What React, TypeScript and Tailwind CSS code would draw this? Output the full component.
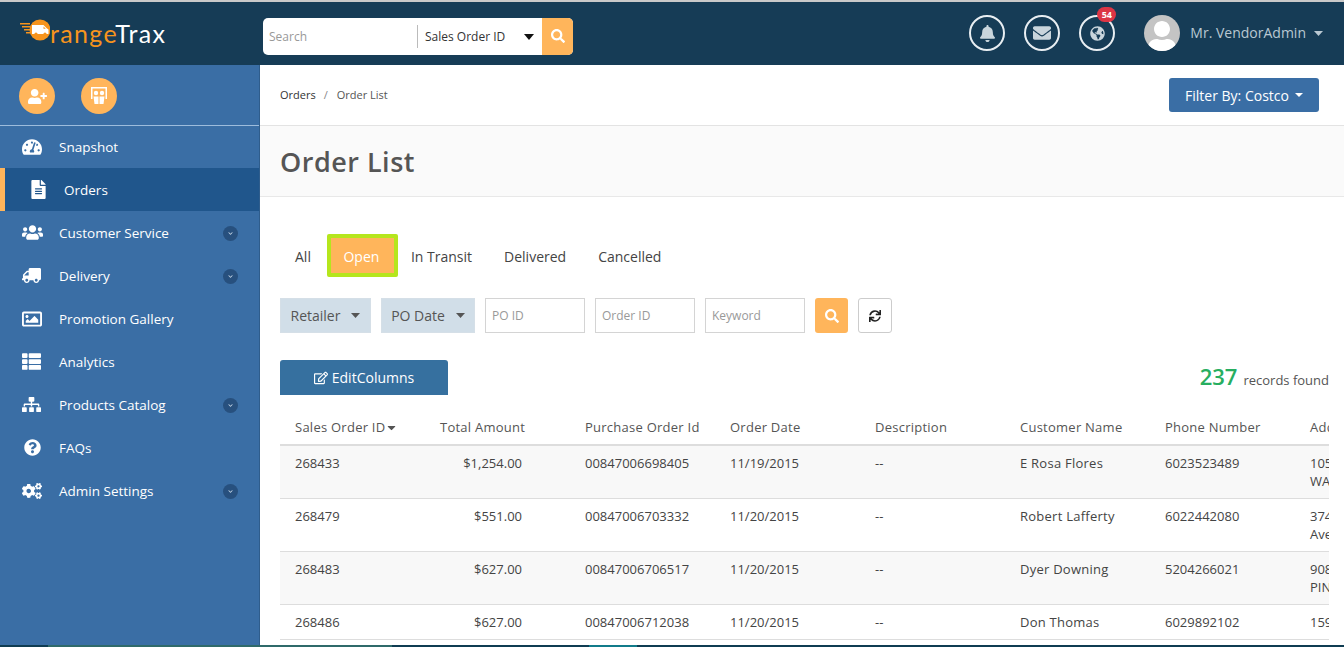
import {
  FaBell,
  FaCaretDown,
  FaChevronDown,
  FaCogs,
  FaEnvelope,
  FaFileAlt,
  FaGlobeAmericas,
  FaRegImage,
  FaQuestionCircle,
  FaRegEdit,
  FaSearch,
  FaSitemap,
  FaSync,
  FaTachometerAlt,
  FaThList,
  FaTruck,
  FaUserPlus,
  FaUsers,
  FaUser,
} from "react-icons/fa";

const menu = [
  { label: "Snapshot", icon: FaTachometerAlt, size: 20 },
  { label: "Orders", icon: FaFileAlt, size: 19, active: true },
  { label: "Customer Service", icon: FaUsers, size: 21, sub: true },
  { label: "Delivery", icon: FaTruck, size: 19, sub: true, flip: true },
  { label: "Promotion Gallery", icon: FaRegImage, size: 20 },
  { label: "Analytics", icon: FaThList, size: 19 },
  { label: "Products Catalog", icon: FaSitemap, size: 19, sub: true },
  { label: "FAQs", icon: FaQuestionCircle, size: 17, sub: false, nudge: true },
  { label: "Admin Settings", icon: FaCogs, size: 20, sub: true },
];

const columns = ["Sales Order ID", "Total Amount", "Purchase Order Id", "Order Date", "Description", "Customer Name", "Phone Number", "Address"];

const rows = [
  ["268433", "$1,254.00", "00847006698405", "11/19/2015", "--", "E Rosa Flores", "6023523489", "10544 W Palm Ln", "WADDELL AZ"],
  ["268479", "$551.00", "00847006703332", "11/20/2015", "--", "Robert Lafferty", "6022442080", "3741 E Oak", "Ave Phoenix"],
  ["268483", "$627.00", "00847006706517", "11/20/2015", "--", "Dyer Downing", "5204266021", "908 N Main", "PINAL AZ"],
  ["268486", "$627.00", "00847006712038", "11/20/2015", "--", "Don Thomas", "6029892102", "1593 E Mesa", ""],
];

const tabs = ["All", "Open", "In Transit", "Delivered", "Cancelled"];

function Logo() {
  return (
    <div className="flex items-start">
      {/* speed lines, van and the round O */}
      <svg width="30" height="22" viewBox="0 0 30 22" className="mt-[1px]">
        <g fill="#f7941d">
          <rect x="0" y="4" width="10" height="1.500" />
          <rect x="2" y="7" width="8" height="1.500" />
          <rect x="4" y="10" width="6" height="1.500" />
          <rect x="6" y="13" width="4" height="1.500" />
          <circle cx="20" cy="11" r="10.500" />
        </g>
        <path d="M12 6h11.500l3.500 3.500 1.500 1v4.500H12z" fill="#fff" />
        <path d="M23.500 7.500l2.300 2.300h-2.300z" fill="#f7941d" />
        <circle cx="16" cy="15" r="1.600" fill="#f7941d" />
        <circle cx="25" cy="15" r="1.600" fill="#f7941d" />
      </svg>
      <span className="font-['Lato',sans-serif] text-[25px] leading-[30px] tracking-[1.350px] text-[#f7941d]">
        range<span className="text-white">Trax</span>
      </span>
    </div>
  );
}

function BoardIcon() {
  return (
    <svg width="16" height="18" viewBox="0 0 16 18" fill="#fff">
      <path d="M0 0h16v12h-1.500V1.500h-13V12H0z" />
      <circle cx="5" cy="6" r="2.200" />
      <circle cx="11" cy="6" r="2.200" />
      <path d="M2.500 9.500h5V17H3.500zM8.500 9.500h5l-1 7.500h-4z" />
    </svg>
  );
}

export default function App() {
  return (
    <div className="flex h-[647px] w-[1344px] flex-col overflow-hidden bg-white font-['Open_Sans',sans-serif] text-[13px] text-[#444]">
      <div className="h-[2px] shrink-0 bg-[#c9c9c9]" />

      {/* header */}
      <header className="flex h-[63px] shrink-0 items-center bg-[#163c56]">
        <div className="mb-[2px] w-[263px] pl-[20px]">
          <Logo />
        </div>
        <div className="mt-[5px] flex h-[37px] w-[310px] overflow-hidden rounded-[5px] bg-white">
          <div className="flex w-[154px] items-center pl-[6px] pt-[2px] text-[12px] text-[#999]">Search</div>
          <div className="my-[7px] w-px bg-[#bbb]" />
          <div className="flex flex-1 items-center pl-[7px] pt-[2px] text-[12px] text-[#333]">
            Sales Order ID
            <svg width="10" height="6" viewBox="0 0 10 6" className="ml-[19px]">
              <path d="M0 0h10L5 6z" fill="#111" />
            </svg>
          </div>
          <div className="flex w-[31px] items-center justify-center bg-[#ffb55b] text-white">
            <FaSearch size={14} />
          </div>
        </div>

        <div className="mb-[1px] ml-auto flex items-center">
          <span className="flex h-[36px] w-[36px] items-center justify-center rounded-full border-2 border-[#e8eef2] text-[#c9d5dc]">
            <FaBell size={17} />
          </span>
          <span className="ml-[19px] flex h-[36px] w-[36px] items-center justify-center rounded-full border-2 border-[#e8eef2] text-[#c9d5dc]">
            <FaEnvelope size={18} />
          </span>
          <span className="relative ml-[19px] flex h-[36px] w-[36px] items-center justify-center rounded-full border-2 border-[#e8eef2] text-[#c9d5dc]">
            <FaGlobeAmericas size={15} />
            <span className="absolute -top-[10px] left-[16px] flex h-[15px] w-[19px] items-center justify-center rounded-full bg-[#dc3545] text-[9px] font-bold leading-none text-white">
              54
            </span>
          </span>
          <span className="relative ml-[29px] flex h-[36px] w-[36px] items-center justify-center overflow-hidden rounded-full bg-[#c4c4c4] text-white">
            <FaUser size={32} className="mt-[7px]" />
          </span>
          <span className="ml-[10px] pb-[2px] text-[14px] text-[#b9c8d2]">Mr. VendorAdmin</span>
          <svg width="9" height="5" viewBox="0 0 9 5" className="ml-[8px] mr-[21px]">
            <path d="M0 0h9L4.500 5z" fill="#b9c8d2" />
          </svg>
        </div>
      </header>

      <div className="flex min-h-0 flex-1">
        {/* sidebar */}
        <aside className="w-[260px] shrink-0 border-r border-[#2f5d8c] bg-[#3a6ea5] text-[13.500px] text-white">
          <div className="flex h-[61px] items-center gap-[26px] border-b border-[#9dbcdc] pl-[19px] pt-[2px]">
            <span className="flex h-[36px] w-[36px] items-center justify-center rounded-full bg-[#ffb55b]">
              <FaUserPlus size={19} />
            </span>
            <span className="flex h-[36px] w-[36px] items-center justify-center rounded-full bg-[#ffb55b]">
              <BoardIcon />
            </span>
          </div>
          <nav className="-mt-px">
            {menu.map((m) => (
              <div
                key={m.label}
                className={
                  m.active
                    ? "flex h-[43px] items-center border-l-[5px] border-[#ffb55b] bg-[#20568c] pl-[24px]"
                    : "flex h-[43px] items-center pl-[22px]"
                }
              >
                <span className={m.nudge ? "flex w-[37px] shrink-0 pl-[2px]" : "flex w-[37px] shrink-0"}>
                  <m.icon size={m.size} className={m.flip ? "-scale-x-100" : ""} />
                </span>
                <span className={m.active ? "-ml-[2px] pt-[1px]" : "pt-[1px]"}>{m.label}</span>
                {m.sub && (
                  <span className="ml-auto mr-[21px] mt-[2px] flex h-[15px] w-[15px] items-center justify-center rounded-full bg-[#27507e] text-[#c5d5e5]">
                    <FaChevronDown size={5} />
                  </span>
                )}
              </div>
            ))}
          </nav>
        </aside>

        {/* main */}
        <main className="min-w-0 flex-1">
          <div className="flex h-[61px] items-center justify-between border-b border-[#e3e3e3] pl-[20px] pr-[25px]">
            <div className="flex text-[11px] text-[#333]">
              <span>Orders</span>
              <span className="ml-[8px] mr-[9px] text-[#888]">/</span>
              <span className="text-[#555]">Order List</span>
            </div>
            <button className="flex h-[34px] w-[150px] items-center justify-center rounded-[3px] bg-[#3a6ea5] text-[14px] text-white">
              Filter By: Costco
              <svg width="8" height="4" viewBox="0 0 8 4" className="ml-[6px]">
                <path d="M0 0h8L4 4z" fill="#fff" />
              </svg>
            </button>
          </div>

          <div className="flex h-[71px] items-center border-b border-[#e8e8e8] bg-[#fafafa] pl-[20px] pt-[2px]">
            <h1 className="text-[27px] font-semibold tracking-[0.5px] text-[#555]">Order List</h1>
          </div>

          <div className="pl-[20px] pr-[15px]">
            <div className="mt-[37px] flex h-[43px] items-center pl-[15px] text-[14px] text-[#444]">
              {tabs.map((t) =>
                t === "Open" ? (
                  <span key={t} className="ml-[16px] mr-[13px] flex h-[43px] w-[71px] items-center justify-center rounded-[2px] border-[4px] border-[#b5e61d] bg-[#ffb55b] pr-[2px] pt-[1px] text-white">
                    {t}
                  </span>
                ) : (
                  <span key={t} className="mr-[32px] pt-[2px] first:mr-0 last:mr-0">
                    {t}
                  </span>
                )
              )}
            </div>

            <div className="mt-[21px] flex items-center gap-[10px]">
              <button className="flex h-[35px] w-[91px] items-center justify-center border border-[#d5dfe7] bg-[#d1dee8] text-[14px] text-[#555]">
                Retailer
                <svg width="9" height="5" viewBox="0 0 9 5" className="ml-[11px]">
                  <path d="M0 0h9L4.500 5z" fill="#555" />
                </svg>
              </button>
              <button className="flex h-[35px] w-[94px] items-center justify-center border border-[#d5dfe7] bg-[#d1dee8] text-[14px] text-[#555]">
                PO Date
                <svg width="9" height="5" viewBox="0 0 9 5" className="ml-[11px]">
                  <path d="M0 0h9L4.500 5z" fill="#555" />
                </svg>
              </button>
              {["PO ID", "Order ID", "Keyword"].map((p) => (
                <div key={p} className="flex h-[35px] w-[100px] items-center border border-[#d4d4d4] pl-[6px] text-[12px] text-[#999]">
                  {p}
                </div>
              ))}
              <button className="flex h-[35px] w-[33px] items-center justify-center rounded-[3px] bg-[#ffb55b] text-white">
                <FaSearch size={14} />
              </button>
              <button className="flex h-[35px] w-[34px] items-center justify-center rounded-[3px] border border-[#ccc] text-[#222]">
                <FaSync size={12} />
              </button>
            </div>

            <div className="mt-[27px] flex h-[35px] items-center justify-between">
              <button className="flex h-[35px] w-[168px] items-center justify-center gap-[4px] rounded-t-[3px] bg-[#36709f] text-[14px] text-white">
                <FaRegEdit size={14} />
                EditColumns
              </button>
              <div className="flex items-baseline text-[#555]">
                <span className="text-[22px] font-semibold leading-none text-[#27ae60]">237</span>
                <span className="ml-[6px] text-[13px]">records found</span>
              </div>
            </div>

            <div className="mt-[15px] overflow-hidden">
              <table className="w-[1160px] table-fixed border-collapse text-left text-[13px] leading-[18px] text-[#444]">
                <thead>
                  <tr className="h-[35px] border-b-2 border-[#ddd]">
                    {columns.map((c, i) => (
                      <th key={c} className="w-[145px] pb-[1px] pl-[15px] align-middle font-medium tracking-[0.25px] text-[#555]">
                        {c}
                        {i === 0 && <FaCaretDown size={13} className="ml-[0px] inline-block -translate-y-[1px]" />}
                      </th>
                    ))}
                  </tr>
                </thead>
                <tbody>
                  {rows.map((r, i) => (
                    <tr key={r[0]} className={i % 2 === 0 ? "border-b border-[#ddd] bg-[#f8f8f8]" : "border-b border-[#ddd]"}>
                      {r.slice(0, 7).map((v, j) => (
                        <td
                          key={j}
                          className={
                            j === 1
                              ? "py-2 pr-[48px] text-right align-top"
                              : j === 5
                                ? "py-2 pl-[15px] align-top tracking-[0.25px]"
                                : "py-2 pl-[15px] align-top"
                          }
                        >
                          {v}
                        </td>
                      ))}
                      <td className="whitespace-nowrap py-2 pl-[15px] align-top">
                        {r[7]}
                        {r[8] && <br />}
                        {r[8]}
                      </td>
                    </tr>
                  ))}
                </tbody>
              </table>
            </div>
          </div>
        </main>
      </div>

      {/* bottom strip */}
      <div className="flex h-[2px] shrink-0 bg-[#0f3c52]">
        <div className="ml-[48px] w-[344px] bg-[#2f6a6a]" />
        <div className="ml-[197px] w-[48px] bg-[#117b8a]" />
      </div>
    </div>
  );
}
